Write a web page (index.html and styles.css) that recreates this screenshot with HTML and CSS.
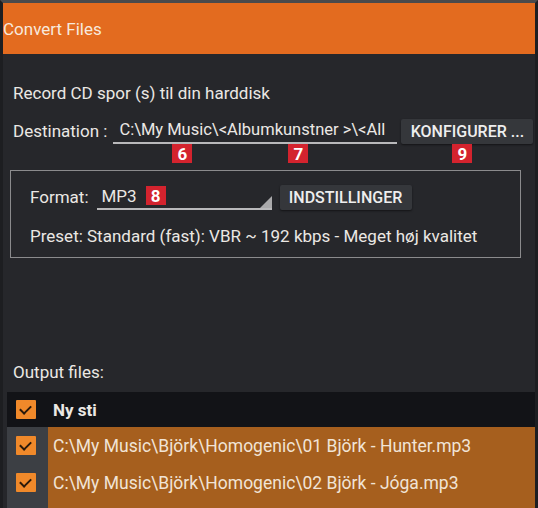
FILE: index.html
```html
<!DOCTYPE html>
<html lang="da">
<head>
  <meta charset="UTF-8">
  <title>Convert Files</title>
  <link rel="stylesheet" href="styles.css">
</head>
<body>
  <div class="window">
    <div class="titlebar">Convert Files</div>

    <div class="content">
      <p class="intro">Record CD spor (s) til din harddisk</p>

      <div class="dest-row">
        <span class="label">Destination :</span>
        <div class="field dest-field">
          <span class="clip">C:\My Music\&lt;Albumkunstner &gt;\&lt;All</span>
          <span class="badge b6">6</span>
          <span class="badge b7">7</span>
        </div>
        <button class="btn konf">KONFIGURER ...
          <span class="badge b9">9</span>
        </button>
      </div>

      <div class="format-box">
        <div class="format-row">
          <span class="label">Format:</span>
          <div class="field select">
            MP3
            <span class="badge b8">8</span>
            <span class="corner"></span>
          </div>
          <button class="btn indst">INDSTILLINGER</button>
        </div>
        <p class="preset">Preset: Standard (fast): VBR ~ 192 kbps - Meget høj kvalitet</p>
      </div>

      <p class="out-label">Output files:</p>
    </div>

    <div class="table">
      <div class="row head">
        <div class="cell-check"><span class="check"></span></div>
        <div class="cell-text">Ny sti</div>
      </div>
      <div class="row file">
        <div class="cell-check"><span class="check"></span></div>
        <div class="cell-text">C:\My Music\Björk\Homogenic\01 Björk - Hunter.mp3</div>
      </div>
      <div class="row file">
        <div class="cell-check"><span class="check"></span></div>
        <div class="cell-text">C:\My Music\Björk\Homogenic\02 Björk - Jóga.mp3</div>
      </div>
      <div class="row file">
        <div class="cell-check"><span class="check"></span></div>
        <div class="cell-text"></div>
      </div>
    </div>
  </div>
</body>
</html>
```

FILE: styles.css
```css
body {
  margin: 0;
  background-color: #1b1c1f;
  font-family: Roboto, "Liberation Sans", sans-serif;
  color: #ebe8e4;
}
.window {
  width: 532px;
  height: 505px;
  border: 3px solid #1d1e21;
  border-top: 3px solid #4a4a4c;
  background-color: #26272b;
  overflow: hidden;
}
.titlebar {
  height: 51px;
  background-color: #e36b1f;
  color: #f7e9dd;
  font-size: 17px;
  line-height: 53px;
}
.content {
  padding: 0 10px;
}
p {
  margin: 0;
}
.intro {
  font-size: 17px;
  line-height: 20px;
  margin-top: 29px;
}
.dest-row {
  display: flex;
  align-items: center;
  margin-top: 15px;
  height: 26px;
}
.label {
  font-size: 17px;
  white-space: nowrap;
  flex-shrink: 0;
}
.field {
  position: relative;
  flex-shrink: 0;
  height: 26px;
  line-height: 24px;
  font-size: 17px;
  border-bottom: 2px solid #b9b9bb;
  white-space: nowrap;
  box-sizing: border-box;
}
.dest-field {
  width: 284px;
  margin-left: 6px;
  padding-left: 6px;
  font-size: 16.5px;
}
.clip {
  display: block;
}
.btn {
  position: relative;
  flex-shrink: 0;
  font-family: Roboto, "Liberation Sans", sans-serif;
  font-size: 16px;
  font-weight: 500;
  color: #eeeeee;
  background-color: #35373b;
  border: none;
  border-radius: 2px;
  height: 25px;
  padding: 0 4px;
  white-space: nowrap;
  box-shadow: 0 1px 2px rgba(0, 0, 0, 0.5);
}
.konf {
  margin-left: 4px;
  width: 132px;
}
.badge {
  position: absolute;
  top: 26px;
  width: 20px;
  height: 19px;
  line-height: 20px;
  background-color: #d3232e;
  color: #ffffff;
  font-weight: bold;
  font-size: 17px;
  text-align: center;
}
.b6 { left: 59px; }
.b7 { left: 175px; }
.b9 { left: 51px; top: 25px; }
.b8 { left: 49px; top: 2px; }
.format-box {
  margin-top: 26px;
  margin-left: -3px;
  width: 511px;
  height: 88px;
  border: 1px solid #8b8b8d;
  padding-left: 19px;
  box-sizing: border-box;
}
.format-row {
  display: flex;
  align-items: center;
  margin-top: 13px;
  height: 26px;
}
.select {
  width: 175px;
  margin-left: 8px;
  padding-left: 5px;
}
.corner {
  position: absolute;
  right: 0;
  bottom: 0;
  width: 0;
  height: 0;
  border-left: 12px solid transparent;
  border-bottom: 12px solid #a9a9ab;
}
.indst {
  margin-left: 8px;
  width: 132px;
}
.preset {
  font-size: 17px;
  line-height: 20px;
  margin-top: 16px;
}
.out-label {
  font-size: 17px;
  line-height: 20px;
  margin-top: 104px;
}
.table {
  margin-top: 10px;
  margin-left: 4px;
}
.row {
  display: flex;
  align-items: center;
}
.row.head {
  height: 35px;
  background-color: #121317;
}
.row.file {
  height: 37px;
  background-color: #a65f1e;
}
.cell-check {
  width: 41px;
  height: 100%;
  display: flex;
  align-items: center;
  padding-left: 9px;
  box-sizing: border-box;
}
.row.file .cell-check {
  background-color: #3c3f44;
}
.check {
  position: relative;
  width: 20px;
  height: 19px;
  background-color: #f0892a;
  border-radius: 1px;
}
.check::after {
  content: "";
  position: absolute;
  left: 6px;
  top: 3px;
  width: 5px;
  height: 9px;
  border-right: 2px solid #2a1a0c;
  border-bottom: 2px solid #2a1a0c;
  transform: rotate(45deg);
}
.cell-text {
  padding-left: 5px;
  font-size: 17.5px;
}
.row.head .cell-text {
  font-weight: bold;
  font-size: 17px;
}
.row.file .cell-text {
  color: #f1e4d6;
}
```
